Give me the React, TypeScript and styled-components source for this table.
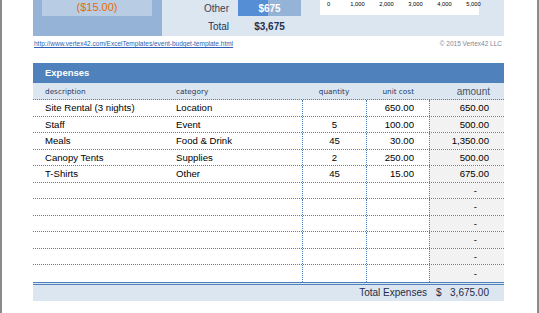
import React from "react";
import styled, { createGlobalStyle } from "styled-components";

const Global = createGlobalStyle`
  html, body { margin: 0; padding: 0; background: #ffffff; }
  body { font-family: "Liberation Sans", Arial, sans-serif; }
`;

const Frame = styled.div`
  box-sizing: border-box;
  width: 539px;
  height: 313px;
  border-left: 2px solid #8a8a8a;
  border-right: 2px solid #8a8a8a;
  padding-left: 31px;
  overflow: hidden;
  background: #fff;
`;

const Sheet = styled.div`
  width: 471px;
  display: flex;
  flex-direction: column;
`;

const Summary = styled.div`
  display: flex;
  height: 36px;
`;

const BalanceBlock = styled.div`
  width: 129px;
  background: #95b3d7;
  padding-left: 9px;
  box-sizing: border-box;
`;

const BalanceBox = styled.div`
  width: 110px;
  height: 16px;
  background: #b8cce4;
  color: #e46c0a;
  font-size: 11px;
  line-height: 15px;
  text-align: center;
`;

const ChartBlock = styled.div`
  flex: 1;
  background: #dce6f1;
  display: grid;
  grid-template-columns: 67px 63px 169px;
  grid-template-rows: 16px 20px;
  column-gap: 9px;
  align-items: center;
`;

const Label = styled.div`
  text-align: right;
  font-size: 10px;
  color: ${(p: { $strong?: boolean }) => (p.$strong ? "#1f3350" : "#3a4252")};
`;

const Bar = styled.div`
  height: 16px;
  align-self: start;
  background: #95b3d7;
  position: relative;
  display: flex;
  align-items: center;
  justify-content: center;
`;

const BarFill = styled.div`
  position: absolute;
  left: 0;
  top: 0;
  bottom: 0;
  background: #558ed5;
`;

const BarText = styled.span`
  position: relative;
  color: #fff;
  font-weight: bold;
  font-size: 10px;
`;

const TotalValue = styled.div`
  text-align: center;
  font-size: 10px;
  color: #1f3350;
  font-weight: bold;
`;

const ChartArea = styled.div`
  height: 15px;
  align-self: start;
  margin-left: 10px;
  background: #fff;
  position: relative;
`;

const Tick = styled.span`
  position: absolute;
  top: 1px;
  font-size: 5.8px;
  line-height: 7px;
  color: #000;
  transform: translateX(-50%);
`;

const LinkRow = styled.div`
  display: flex;
  justify-content: space-between;
  align-items: center;
  height: 9px;
  margin-top: 3px;
  margin-bottom: 15px;
  font-size: 6.5px;
  padding-left: 1px;
  padding-right: 2px;
`;

const Link = styled.a`
  color: #2f5fb3;
  text-decoration: underline;
`;

const Copy = styled.span`
  color: #7f8794;
`;

const SectionTitle = styled.div`
  height: 20px;
  background: #4f81bd;
  color: #fff;
  font-weight: bold;
  font-size: 9.5px;
  line-height: 20px;
  padding-left: 12px;
`;

const cols = "142px 127px 64px 63px 75px";

const HeadRow = styled.div`
  display: grid;
  grid-template-columns: ${cols};
  box-sizing: border-box;
  height: 17px;
  background: #dce6f1;
  border-bottom: 1px dotted #4f81bd;
  align-items: center;
  font-family: "DejaVu Sans", Verdana, sans-serif;
  font-size: 7.3px;
  color: #1f3a64;
`;

const HeadCell = styled.div<{ $align?: string; $pad?: string }>`
  text-align: ${(p) => p.$align || "left"};
  padding: ${(p) => p.$pad || "0"};
`;

const AmountHead = styled.div`
  text-align: right;
  padding-right: 14px;
  font-family: "Liberation Sans", Arial, sans-serif;
  font-size: 10px;
  color: #44546a;
`;

const Row = styled.div<{ $last?: boolean }>`
  display: grid;
  grid-template-columns: ${cols};
  box-sizing: border-box;
  height: 16.5px;
  border-bottom: ${(p) => (p.$last ? "none" : "1px dotted #4f81bd")};
  font-size: 9.6px;
  color: #000;
`;

const Cell = styled.div<{ $align?: string; $pad?: string; $rule?: boolean; $shade?: boolean }>`
  display: flex;
  align-items: center;
  justify-content: ${(p) => p.$align || "flex-start"};
  padding: ${(p) => p.$pad || "0"};
  border-left: ${(p) => (p.$rule ? "1px dotted #4f81bd" : "none")};
  background: ${(p) => (p.$shade ? "#f2f2f2" : "transparent")};
  white-space: nowrap;
`;

const TotalRow = styled.div`
  display: grid;
  grid-template-columns: 396px 75px;
  height: 19px;
  box-sizing: border-box;
  border-top: 3px double #4f81bd;
  background: #dce6f1;
  font-size: 10px;
  color: #1f2b47;
  align-items: center;
`;

const TotalLabel = styled.div`
  text-align: right;
  padding-right: 2px;
`;

const TotalAmount = styled.div`
  display: flex;
  justify-content: space-between;
  padding: 0 15px 0 7px;
`;

type Item = { d: string; c: string; q: string; u: string; a: string };

const items: Item[] = [
  { d: "Site Rental (3 nights)", c: "Location", q: "", u: "650.00", a: "650.00" },
  { d: "Staff", c: "Event", q: "5", u: "100.00", a: "500.00" },
  { d: "Meals", c: "Food & Drink", q: "45", u: "30.00", a: "1,350.00" },
  { d: "Canopy Tents", c: "Supplies", q: "2", u: "250.00", a: "500.00" },
  { d: "T-Shirts", c: "Other", q: "45", u: "15.00", a: "675.00" },
  { d: "", c: "", q: "", u: "", a: "-" },
  { d: "", c: "", q: "", u: "", a: "-" },
  { d: "", c: "", q: "", u: "", a: "-" },
  { d: "", c: "", q: "", u: "", a: "-" },
  { d: "", c: "", q: "", u: "", a: "-" },
  { d: "", c: "", q: "", u: "", a: "-" },
];

const ticks = ["0", "1,000", "2,000", "3,000", "4,000", "5,000"];

export default function App() {
  return (
    <>
      <Global />
      <Frame>
        <Sheet>
          <Summary>
            <BalanceBlock>
              <BalanceBox>($15.00)</BalanceBox>
            </BalanceBlock>
            <ChartBlock>
              <Label>Other</Label>
              <Bar>
                <BarFill style={{ width: "48%" }} />
                <BarText>$675</BarText>
              </Bar>
              <ChartArea>
                {ticks.map((t, i) => (
                  <Tick key={t} style={{ left: 8.5 + i * 29 }}>
                    {t}
                  </Tick>
                ))}
              </ChartArea>
              <Label $strong>Total</Label>
              <TotalValue>$3,675</TotalValue>
              <div />
            </ChartBlock>
          </Summary>
          <LinkRow>
            <Link href="#">http://www.vertex42.com/ExcelTemplates/event-budget-template.html</Link>
            <Copy>© 2015 Vertex42 LLC</Copy>
          </LinkRow>
          <SectionTitle>Expenses</SectionTitle>
          <HeadRow>
            <HeadCell $pad="0 0 0 12px">description</HeadCell>
            <HeadCell $pad="0 0 0 1px">category</HeadCell>
            <HeadCell $align="center">quantity</HeadCell>
            <HeadCell $align="right" $pad="0 15px 0 0">unit cost</HeadCell>
            <AmountHead>amount</AmountHead>
          </HeadRow>
          {items.map((it, i) => (
            <Row key={i} $last={i === items.length - 1}>
              <Cell $pad="0 0 0 12px">{it.d}</Cell>
              <Cell $pad="0 0 0 1px">{it.c}</Cell>
              <Cell $rule $align="center">{it.q}</Cell>
              <Cell $rule $align="flex-end" $pad="0 15px 0 0">{it.u}</Cell>
              <Cell $rule $shade $align="flex-end" $pad={it.a === "-" ? "0 27px 0 0" : "0 15px 0 0"}>
                {it.a}
              </Cell>
            </Row>
          ))}
          <TotalRow>
            <TotalLabel>Total Expenses</TotalLabel>
            <TotalAmount>
              <span>$</span>
              <span>3,675.00</span>
            </TotalAmount>
          </TotalRow>
        </Sheet>
      </Frame>
    </>
  );
}
